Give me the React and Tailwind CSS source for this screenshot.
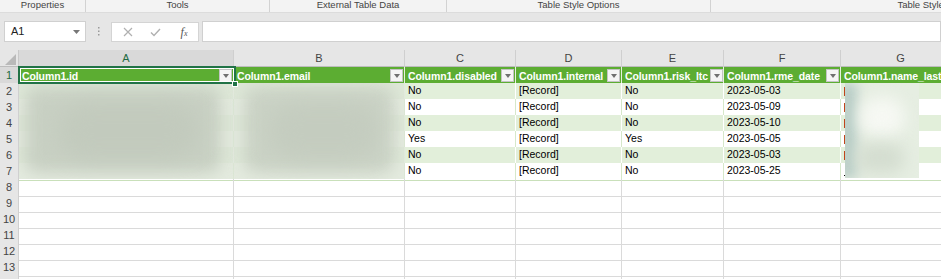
import React from "react";

const groups = [
  { label: "Properties", w: "w-[86px]" },
  { label: "Tools", w: "w-[184px]" },
  { label: "External Table Data", w: "w-[177px]" },
  { label: "Table Style Options", w: "w-[264px]" },
  { label: "Table Styles", w: "w-[424px]" },
];

const letters = ["A", "B", "C", "D", "E", "F", "G", "H"];

const headers = [
  "Column1.id",
  "Column1.email",
  "Column1.disabled",
  "Column1.internal",
  "Column1.risk_ltc",
  "Column1.rme_date",
  "Column1.name_last",
];

const rows = [
  { disabled: "No", internal: "[Record]", risk: "No", date: "2023-05-03", g: "red" },
  { disabled: "No", internal: "[Record]", risk: "No", date: "2023-05-09", g: "red" },
  { disabled: "No", internal: "[Record]", risk: "No", date: "2023-05-10", g: "red" },
  { disabled: "Yes", internal: "[Record]", risk: "Yes", date: "2023-05-05", g: "red" },
  { disabled: "No", internal: "[Record]", risk: "No", date: "2023-05-03", g: "red" },
  { disabled: "No", internal: "[Record]", risk: "No", date: "2023-05-25", g: "dot" },
];

const Ribbon = () => (
  <div className="flex h-[13px] bg-[#f3f3f3] border-b border-[#dcdcdc] overflow-hidden">
    {groups.map((g, i) => (
      <div
        key={g.label}
        className={`${g.w} shrink-0 flex items-center justify-center text-[9.5px] leading-none text-[#444] ${
          i < groups.length - 1 ? "border-r border-[#d2d2d2]" : ""
        }`}
      >
        <span className="-mt-[2px]">{g.label}</span>
      </div>
    ))}
  </div>
);

const FormulaBar = () => (
  <div className="h-[37px] bg-[#e6e6e6] flex items-start pt-[8px] pl-[4px]">
    {/* name box */}
    <div className="w-[82px] h-[21px] bg-white border border-[#d0d0d0] flex items-center justify-between pl-[6px] pr-[5px]">
      <span className="text-[11px] text-[#222]">A1</span>
      <svg width="7" height="4" viewBox="0 0 7 4">
        <path d="M0 0h7L3.5 4z" fill="#777" />
      </svg>
    </div>
    {/* dots */}
    <div className="w-[25px] h-[21px] flex items-center justify-center">
      <svg width="2" height="9" viewBox="0 0 2 9">
        <rect x="0" y="0" width="1.5" height="1.5" fill="#9a9a9a" />
        <rect x="0" y="3.5" width="1.5" height="1.5" fill="#9a9a9a" />
        <rect x="0" y="7" width="1.5" height="1.5" fill="#9a9a9a" />
      </svg>
    </div>
    {/* buttons */}
    <div className="w-[88px] h-[20px] mt-[1px] bg-white border border-[#d4d4d4] flex items-center">
      <div className="w-[29px] flex justify-center pl-[2px]">
        <svg width="10" height="10" viewBox="0 0 10 10">
          <path d="M1 1l8 8M9 1L1 9" stroke="#b0b0b0" strokeWidth="1.2" />
        </svg>
      </div>
      <div className="w-[29px] flex justify-center">
        <svg width="11" height="9" viewBox="0 0 11 9">
          <path d="M1 4.5l3 3L10 1" stroke="#b0b0b0" strokeWidth="1.4" fill="none" />
        </svg>
      </div>
      <div className="w-[28px] flex justify-center items-end font-['Liberation_Serif',serif] italic text-[#555] leading-none">
        <span className="text-[12px]">f</span>
        <span className="text-[8px]">x</span>
      </div>
    </div>
    {/* formula input */}
    <div className="ml-[3px] flex-1 h-[21px] bg-white border border-[#d0d0d0]" />
  </div>
);

const FilterBtn = () => (
  <div className="w-[13px] h-[13px] shrink-0 bg-[#f5f5f5] border border-[#c4c4c4] flex items-center justify-center">
    <svg width="6" height="4" viewBox="0 0 6 4">
      <path d="M0 0h6L3 4z" fill="#707070" />
    </svg>
  </div>
);

const Blur = ({ className }) => <div className={`absolute ${className}`} />;

const Sheet = () => {
  const extra = Array.from({ length: 7 }, (_, i) => i + 8);
  const gridCols =
    "grid grid-cols-[19px_215px_171px_111px_106px_102px_117px_120px_100px]";

  return (
    <div className="relative text-[11px]">
      {/* column letters */}
      <div className={`${gridCols} h-[17px] bg-[#e6e6e6] border-b border-[#bdbdbd]`}>
        <div className="relative border-r border-[#c8c8c8]">
          <svg className="absolute right-[2px] bottom-[2px]" width="11" height="11" viewBox="0 0 11 11">
            <path d="M11 0v11H0z" fill="#b9b9b9" />
          </svg>
        </div>
        {letters.map((l, i) => (
          <div
            key={l}
            className={`flex items-center justify-center border-r border-[#cfcfcf] text-[11px] ${
              i === 0 ? "bg-[#d9d9d9] text-[#1e6b41]" : "text-[#444]"
            }`}
          >
            {l}
          </div>
        ))}
      </div>

      {/* header row 1 */}
      <div className={`${gridCols} h-[16px]`}>
        <div className="flex items-center justify-center bg-[#d9d9d9] border-r border-[#bdbdbd] border-b border-[#d0d0d0] text-[#1e6b41]">
          1
        </div>
        {headers.map((h) => (
          <div
            key={h}
            className="bg-[#5cad32] border-r border-[#e6f1df] flex items-center justify-between gap-[2px] pl-[3px] pr-[1px] overflow-hidden"
          >
            <span className="font-bold text-white text-[10.5px] tracking-[-0.1px] whitespace-nowrap leading-none">{h}</span>
            <FilterBtn />
          </div>
        ))}
        <div className="border-r border-b border-[#dadada]" />
      </div>

      {/* data rows */}
      {rows.map((r, i) => {
        const band = i % 2 === 0;
        const bg = band ? "bg-[#e2efda]" : "bg-white";
        const line = band ? "border-white" : "border-[#d6e8ca]";
        const cell = `${bg} border-r ${line} border-b border-b-[#c9e0ba] flex items-center pl-[3px] whitespace-nowrap overflow-hidden text-black text-[10.5px]`;
        return (
          <div key={i} className={`${gridCols} h-[16px]`}>
            <div className="flex items-center justify-center bg-[#e6e6e6] border-r border-[#bdbdbd] border-b border-[#d0d0d0] text-[#444]">
              {i + 2}
            </div>
            <div className={cell} />
            <div className={cell} />
            <div className={cell}>{r.disabled}</div>
            <div className={cell}>{r.internal}</div>
            <div className={cell}>{r.risk}</div>
            <div className={cell}>{r.date}</div>
            <div className={cell}>
              {r.g === "red" ? (
                <span className="block w-[2px] h-[9px] bg-[#c0451c]" />
              ) : (
                <span className="block w-[2px] h-[1px] mt-[8px] bg-black" />
              )}
            </div>
            <div className="border-r border-b border-[#dadada]" />
          </div>
        );
      })}

      {/* empty rows */}
      {extra.map((n) => (
        <div key={n} className={`${gridCols} h-[16px]`}>
          <div className="flex items-center justify-center bg-[#e6e6e6] border-r border-[#bdbdbd] border-b border-[#d0d0d0] text-[#444]">
            {n}
          </div>
          {letters.map((l) => (
            <div key={l} className="border-r border-b border-[#dadada]" />
          ))}
        </div>
      ))}

      {/* redacted area, columns A-B */}
      <div className="absolute left-[19px] top-[33px] w-[386px] h-[96px] overflow-hidden pointer-events-none">
        <div className="absolute inset-0 bg-[#dde6d7] opacity-80" />
        <Blur className="left-[6px] top-[4px] w-[196px] h-[86px] bg-[#c8d0c3] blur-[8px] rounded-xl" />
        <Blur className="left-[225px] top-[4px] w-[150px] h-[86px] bg-[#cad2c5] blur-[8px] rounded-xl" />
        <Blur className="left-[40px] top-[20px] w-[140px] h-[55px] bg-[#c2cabd] blur-[10px] rounded-full" />
        <Blur className="left-[250px] top-[20px] w-[110px] h-[55px] bg-[#c4ccbf] blur-[10px] rounded-full" />
      </div>

      {/* redacted area, column G */}
      <div className="absolute left-[845px] top-[33px] w-[74px] h-[95px] overflow-hidden pointer-events-none bg-[#e6eee2]">
        <Blur className="-left-[6px] top-[0px] w-[18px] h-[95px] bg-[#b7ccc6] blur-[6px]" />
        <Blur className="left-[14px] top-[14px] w-[46px] h-[40px] bg-[#f6f8f3] blur-[8px] rounded-full" />
        <Blur className="left-[10px] top-[60px] w-[50px] h-[30px] bg-[#d4ddd0] blur-[8px] rounded-full" />
      </div>

      {/* selected cell A1 */}
      <div className="absolute left-[18px] top-[16px] w-[218px] h-[18px] border-2 border-[#217346] shadow-[inset_0_0_0_1px_#ffffff] pointer-events-none" />
      <div className="absolute left-[232px] top-[31px] w-[6px] h-[6px] bg-[#217346] border border-white pointer-events-none" />
    </div>
  );
};

export default function App() {
  return (
    <div className="w-[941px] h-[279px] overflow-hidden bg-white font-['Liberation_Sans',Arial,sans-serif]">
      <Ribbon />
      <FormulaBar />
      <Sheet />
    </div>
  );
}
